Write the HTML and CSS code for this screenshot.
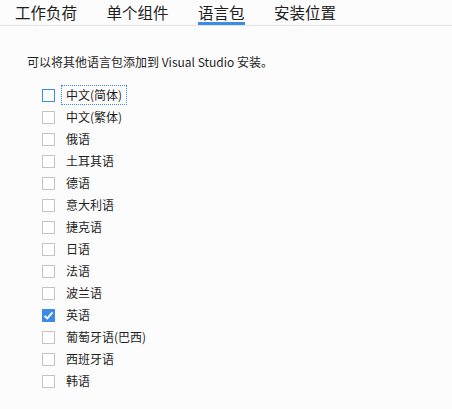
FILE: index.html
```html
<!DOCTYPE html>
<html lang="zh-CN">
<head>
    <meta charset="UTF-8">
    <title>语言包</title>
    <link rel="stylesheet" href="styles.css">
</head>
<body>
    <!-- Tabs -->
    <div class="tabs">
        <span class="tab">工作负荷</span>
        <span class="tab">单个组件</span>
        <span class="tab active">语言包</span>
        <span class="tab">安装位置</span>
    </div>

    <div class="content">
        <p class="desc">可以将其他语言包添加到 Visual Studio 安装。</p>

        <ul class="lang-list">
            <li class="item focused"><span class="box"></span><span class="label">中文(简体)</span></li>
            <li class="item"><span class="box"></span><span class="label">中文(繁体)</span></li>
            <li class="item"><span class="box"></span><span class="label">俄语</span></li>
            <li class="item"><span class="box"></span><span class="label">土耳其语</span></li>
            <li class="item"><span class="box"></span><span class="label">德语</span></li>
            <li class="item"><span class="box"></span><span class="label">意大利语</span></li>
            <li class="item"><span class="box"></span><span class="label">捷克语</span></li>
            <li class="item"><span class="box"></span><span class="label">日语</span></li>
            <li class="item"><span class="box"></span><span class="label">法语</span></li>
            <li class="item"><span class="box"></span><span class="label">波兰语</span></li>
            <li class="item checked"><span class="box">
                <svg width="13" height="13" viewBox="0 0 13 13"><path d="M2.5 6.8 L5.2 9.4 L10.5 3.4" fill="none" stroke="#fff" stroke-width="1.8"/></svg>
            </span><span class="label">英语</span></li>
            <li class="item"><span class="box"></span><span class="label">葡萄牙语(巴西)</span></li>
            <li class="item"><span class="box"></span><span class="label">西班牙语</span></li>
            <li class="item"><span class="box"></span><span class="label">韩语</span></li>
        </ul>
    </div>
</body>
</html>
```

FILE: styles.css
```css
/* Basic styling */
body {
    margin: 0;
    background: #fcfcfc;
    color: #1e1e1e;
    font-family: "Noto Sans CJK SC", "Liberation Sans", sans-serif;
}

/* Tabs */
.tabs {
    display: flex;
    gap: 29.5px;
    padding-left: 15px;
    height: 25px;
    border-bottom: 1px solid #e3e3e3;
}

.tab {
    font-size: 15.5px;
    line-height: 24px;
    height: 25px;
    box-sizing: border-box;
}

.tab.active {
    border-bottom: 3px solid #3c8ce7;
}

/* Content */
.content {
    padding-left: 27px;
}

.desc {
    margin: 27px 0 13px;
    font-size: 12px;
    line-height: 18px;
}

.lang-list {
    list-style: none;
    margin: 0;
    padding: 0 0 0 15px;
}

.item {
    display: flex;
    align-items: center;
    height: 22px;
    font-size: 12px;
}

.box {
    width: 11px;
    height: 11px;
    border: 1px solid #c4c4c4;
    background: #fff;
    margin-right: 6px;
    display: flex;
}

.label {
    padding: 1px 4px;
    border: 1px dotted transparent;
    line-height: 16px;
}

.focused .box {
    border-color: #3c8ce7;
}

.focused .label {
    border-color: #3c8ce7;
}

.checked .box {
    background: #3c8ce7;
    border-color: #3c8ce7;
}

.checked svg {
    margin: -1px;
}
```
